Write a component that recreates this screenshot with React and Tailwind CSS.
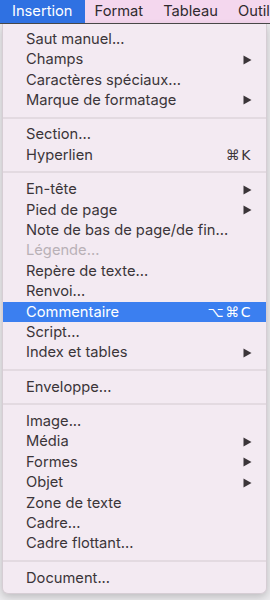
import React from 'react';

const groups = [
  [
    { label: 'Saut manuel...' },
    { label: 'Champs', sub: true },
    { label: 'Caractères spéciaux...' },
    { label: 'Marque de formatage', sub: true },
  ],
  [
    { label: 'Section...' },
    { label: 'Hyperlien', shortcut: '⌘K' },
  ],
  [
    { label: 'En-tête', sub: true },
    { label: 'Pied de page', sub: true },
    { label: 'Note de bas de page/de fin...' },
    { label: 'Légende...', disabled: true },
    { label: 'Repère de texte...' },
    { label: 'Renvoi...' },
    { label: 'Commentaire', shortcut: '⌥⌘C', active: true },
    { label: 'Script...' },
    { label: 'Index et tables', sub: true },
  ],
  [{ label: 'Enveloppe...' }],
  [
    { label: 'Image...' },
    { label: 'Média', sub: true },
    { label: 'Formes', sub: true },
    { label: 'Objet', sub: true },
    { label: 'Zone de texte' },
    { label: 'Cadre...' },
    { label: 'Cadre flottant...' },
  ],
  [{ label: 'Document...' }],
];

function Arrow() {
  return (
    <svg width="9" height="10" viewBox="0 0 9 10" className="fill-[#3b3539]">
      <path d="M0.5 0.5 L8.5 5 L0.5 9.5 Z" />
    </svg>
  );
}

function MenuItem({ item }) {
  const color = item.active
    ? 'bg-[#3b7ff0] text-white'
    : item.disabled
      ? 'text-[#b9b1b7]'
      : 'text-[#3b3539]';
  return (
    <div className={`flex items-center h-[20.4px] pl-[23px] pr-[14px] ${color}`}>
      <span className="flex-1 leading-none">{item.label}</span>
      {item.sub && <Arrow />}
      {item.shortcut && (
        <span className="leading-none tracking-[1.5px] text-[14px]" style={{ fontFamily: '"DejaVu Sans", sans-serif' }}>
          {item.shortcut}
        </span>
      )}
    </div>
  );
}

export default function App() {
  return (
    <div
      className="w-[270px] h-[600px] bg-[#ecebee] overflow-hidden relative text-[14.7px]"
      style={{ fontFamily: 'Inter, "Liberation Sans", sans-serif' }}
    >
      <div className="flex h-[24px] items-center bg-[#f4d7ee] text-[#2f2a2e] border-b border-[#4a4a4a] whitespace-nowrap">
        <div className="h-full flex items-center px-[12px] bg-[#2f71e2] text-white">Insertion</div>
        <div className="h-full flex items-center px-[10px]">Format</div>
        <div className="h-full flex items-center px-[10px]">Tableau</div>
        <div className="h-full flex items-center px-[10px]">Outils</div>
      </div>

      <div className="ml-[2px] w-[265px] bg-[#f3eaf2] rounded-b-[6px] border border-t-0 border-[#d6cdd4] shadow-[0_3px_8px_rgba(0,0,0,0.2)] pt-[5px] pb-[5px]">
        {groups.map((group, gi) => (
          <div key={gi}>
            {gi > 0 && (
              <div className="h-[14px] flex items-center">
                <div className="w-full h-[2px] bg-[#e3dae1]" />
              </div>
            )}
            {group.map((item) => (
              <MenuItem key={item.label} item={item} />
            ))}
          </div>
        ))}
      </div>
    </div>
  );
}
